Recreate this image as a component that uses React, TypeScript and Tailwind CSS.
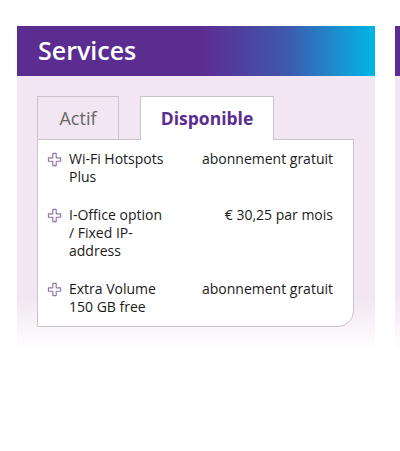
const services = [
  { name: "Wi-Fi Hotspots Plus", price: "abonnement gratuit" },
  { name: "I-Office option / Fixed IP-address", price: "€ 30,25 par mois" },
  { name: "Extra Volume 150 GB free", price: "abonnement gratuit" },
] as const;

function PlusIcon() {
  return (
    <svg
      className="mt-[2px] shrink-0 text-[#8e74a6]"
      width="15"
      height="15"
      viewBox="0 0 16 16"
      fill="none"
      stroke="currentColor"
      strokeWidth="1.2"
      strokeLinejoin="round"
    >
      <path d="M6.2 1.5h3.6v4.7h4.7v3.6H9.8v4.7H6.2V9.8H1.5V6.2h4.7z" />
    </svg>
  );
}

function ServicesCard() {
  return (
    <section className="w-[358px] shrink-0">
      <div className="flex h-[50px] items-center bg-[linear-gradient(90deg,#5c2d91_0%,#5c2d91_52%,#3f58ad_75%,#00b6e6_100%)] px-[21px]">
        <h2 className="text-[25px] font-semibold text-white">Services</h2>
      </div>
      <div className="bg-[linear-gradient(180deg,#f1e6f1_0%,#f1e6f1_80%,#ffffff_100%)] pb-6 pl-5 pr-[21px] pt-5">
        <div className="flex gap-[21px]">
          <div className="flex h-[43px] w-[82px] items-center justify-center border border-b-0 border-[#cbc3cb] text-[18px] text-[#666]">
            Actif
          </div>
          <div className="relative -mb-px flex h-[44px] w-[134px] items-center justify-center border border-b-0 border-[#cbc3cb] bg-white pb-px text-[17.5px] font-bold text-[#5c2d91]">
            Disponible
          </div>
        </div>
        <div className="flex flex-col gap-5 rounded-br-2xl border border-[#cbc3cb] bg-white pb-[10px] pl-[9px] pr-5 pt-[10px] text-[14px] leading-[18px] text-[#1a1a1a]">
          {services.map((s) => (
            <div key={s.name} className="flex items-start">
              <PlusIcon />
              <span className="ml-[7px] w-[98px]">{s.name}</span>
              <span className="flex-1 text-right">{s.price}</span>
            </div>
          ))}
        </div>
      </div>
    </section>
  );
}

export default function App() {
  return (
    <div className="h-[451px] w-[400px] overflow-hidden bg-white font-['Open_Sans',sans-serif]">
      <div className="flex gap-5 pl-[17px] pt-[26px]">
        <ServicesCard />
        <section className="w-[358px] shrink-0">
          <div className="h-[50px] bg-[#5c2d91]" />
          <div className="h-[274px] bg-[linear-gradient(180deg,#f1e6f1_0%,#f1e6f1_80%,#ffffff_100%)]" />
        </section>
      </div>
    </div>
  );
}
